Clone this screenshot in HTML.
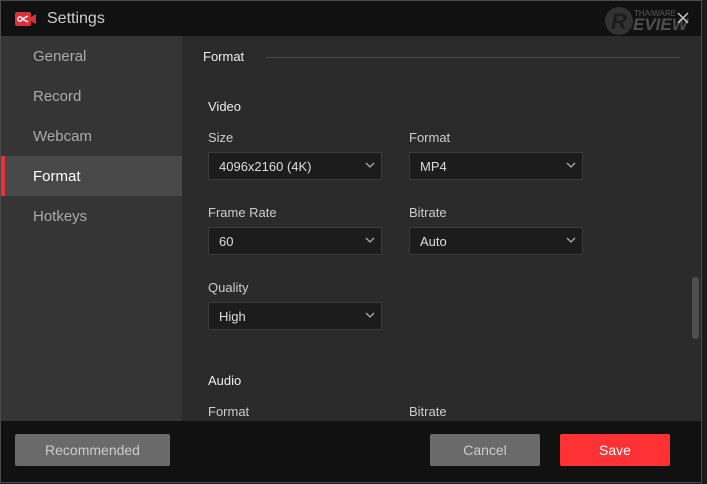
<!DOCTYPE html>
<html><head><meta charset="utf-8"><style>
*{margin:0;padding:0;box-sizing:border-box}
body{width:707px;height:484px;background:#1b1b1b;font-family:"Liberation Sans",sans-serif;position:relative;overflow:hidden;color:#ddd}
.win{position:absolute;left:0;top:0;width:702px;height:483px;border:1px solid #4a4a4a;background:#111;overflow:hidden}
.title{position:absolute;left:0;top:0;width:700px;height:35px;background:#111}
.title span{position:absolute;left:46px;top:9px;font-size:16px;color:#ccc}
.side{position:absolute;left:0;top:35px;width:181px;height:385px;background:#353535}
.item{position:absolute;left:0;width:181px;height:40px;font-size:15px;color:#aaa;padding:12px 0 0 32px}
.item.sel{background:#484848;color:#fff}
.item.sel:before{content:"";position:absolute;left:0;top:0;width:4px;height:40px;background:#e8303a}
.content{position:absolute;left:181px;top:35px;width:519px;height:385px;background:#2a2a2a}
.t{position:absolute;font-size:13px;color:#ccc}
.dd{position:absolute;width:174px;height:28px;background:#1c1c1c;border:1px solid #3c3c3c;border-radius:2px;font-size:13px;color:#ddd;padding:6px 0 0 10px}
.dd svg{position:absolute;right:6px;top:9px}
.footer{position:absolute;left:0;top:420px;width:700px;height:62px;background:#111}
.btn{position:absolute;top:13px;height:32px;border-radius:2px;font-size:14px;text-align:center;line-height:32px}
</style></head><body>
<div class="win">
<div class="title">
<svg style="position:absolute;left:14px;top:11px" width="22" height="14" viewBox="0 0 22 14"><rect x="0" y="0" width="16" height="14" rx="2" fill="#d8323c"/><path d="M16 5 L21 2 L21 12 L16 9Z" fill="#d8323c"/><circle cx="5" cy="7" r="2.2" fill="none" stroke="#fff" stroke-width="1.3"/><path d="M7 7 L13 4 M7 7 L13 10" stroke="#fff" stroke-width="1.3"/></svg>
<span>Settings</span>
<svg style="position:absolute;left:602px;top:2px;opacity:.6" width="98" height="40" viewBox="0 0 98 40"><circle cx="16" cy="18" r="14" fill="#777" opacity=".55"/><text x="8" y="26" font-size="22" font-weight="bold" font-style="italic" fill="#222" font-family="Liberation Sans">R</text><text x="31" y="13" font-size="8" fill="#888" font-family="Liberation Sans">THAIWARE</text><text x="30" y="27" font-size="17" font-weight="bold" font-style="italic" fill="#777" font-family="Liberation Sans">EVIEW</text></svg>
<svg style="position:absolute;left:676px;top:11px" width="12" height="12"><path d="M1 1L11 11M11 1L1 11" stroke="#ccc" stroke-width="1.4"/></svg>
</div>
<div class="side">
<div class="item" style="top:0">General</div>
<div class="item" style="top:40px">Record</div>
<div class="item" style="top:80px">Webcam</div>
<div class="item sel" style="top:120px">Format</div>
<div class="item" style="top:160px">Hotkeys</div>
</div>
<div class="content">
<div class="t" style="left:21px;top:13px;color:#eee">Format</div>
<div style="position:absolute;left:84px;top:21px;width:414px;height:1px;background:#4a4a4a"></div>
<div class="t" style="left:26px;top:63px;color:#eee">Video</div>
<div class="t" style="left:26px;top:94px">Size</div>
<div class="t" style="left:227px;top:94px">Format</div>
<div class="dd" style="left:26px;top:116px">4096x2160 (4K)<svg width="10" height="7"><path d="M1 1L5 5L9 1" stroke="#aaa" fill="none" stroke-width="1.3"/></svg></div>
<div class="dd" style="left:227px;top:116px">MP4<svg width="10" height="7"><path d="M1 1L5 5L9 1" stroke="#aaa" fill="none" stroke-width="1.3"/></svg></div>
<div class="t" style="left:26px;top:169px">Frame Rate</div>
<div class="t" style="left:227px;top:169px">Bitrate</div>
<div class="dd" style="left:26px;top:191px">60<svg width="10" height="7"><path d="M1 1L5 5L9 1" stroke="#aaa" fill="none" stroke-width="1.3"/></svg></div>
<div class="dd" style="left:227px;top:191px">Auto<svg width="10" height="7"><path d="M1 1L5 5L9 1" stroke="#aaa" fill="none" stroke-width="1.3"/></svg></div>
<div class="t" style="left:26px;top:244px">Quality</div>
<div class="dd" style="left:26px;top:266px">High<svg width="10" height="7"><path d="M1 1L5 5L9 1" stroke="#aaa" fill="none" stroke-width="1.3"/></svg></div>
<div class="t" style="left:26px;top:337px;color:#eee">Audio</div>
<div class="t" style="left:26px;top:368px">Format</div>
<div class="t" style="left:227px;top:368px">Bitrate</div>
<div style="position:absolute;left:510px;top:241px;width:7px;height:62px;border-radius:4px;background:#4f4f4f"></div>
</div>
<div class="footer">
<div class="btn" style="left:14px;width:155px;background:#6a6a6a;color:#ccc">Recommended</div>
<div class="btn" style="left:429px;width:110px;background:#6a6a6a;color:#ccc">Cancel</div>
<div class="btn" style="left:559px;width:110px;background:#fe3235;color:#fff">Save</div>
</div>
</div>
</body></html>
